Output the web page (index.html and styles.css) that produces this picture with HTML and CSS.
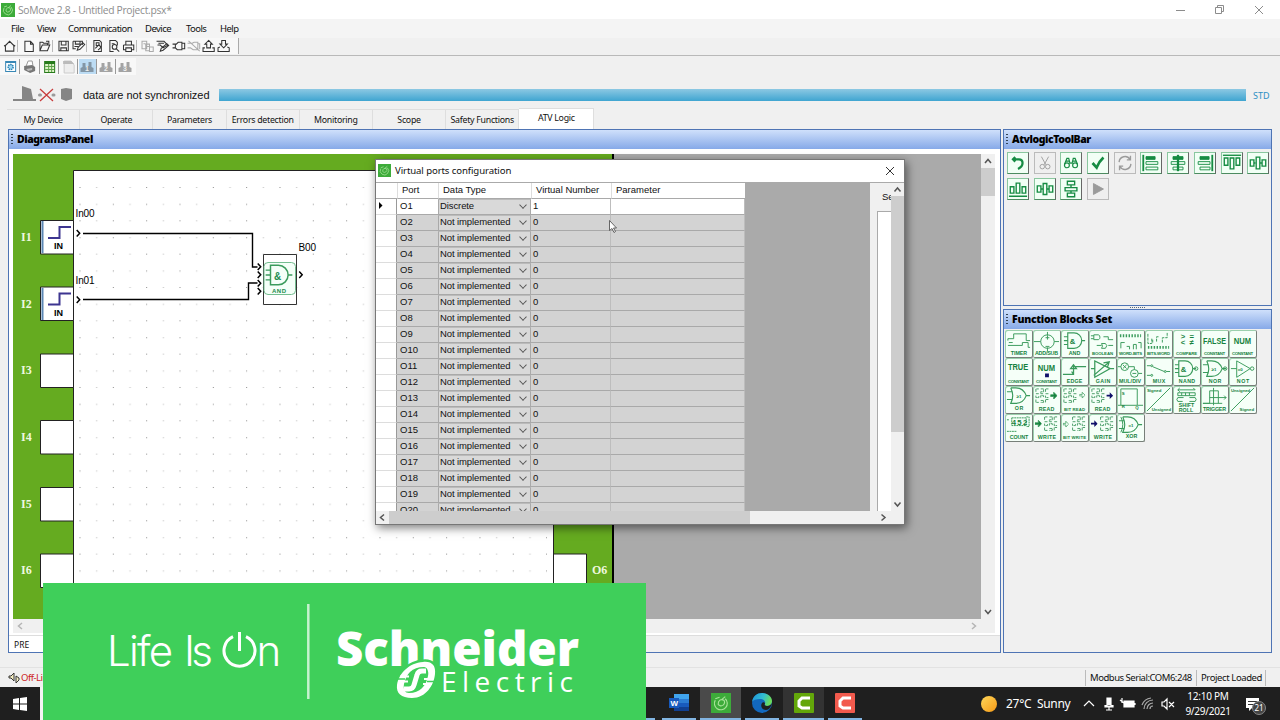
FILE: index.html
```
<!DOCTYPE html>
<html lang="en">
<head>
<meta charset="utf-8">
<title>SoMove 2.8 - Untitled Project.psx*</title>
<link rel="stylesheet" href="styles.css">
</head>
<body>
<svg class="defs" width="0" height="0">
<defs>
<symbol id="leaf" viewBox="0 0 14 14"><rect width="14" height="14" fill="#3dab3a"/><path d="M3 5a4.500 4.500 0 1 0 7-1M5 8a2.500 2.500 0 1 0 4-3c-2-1-4 0-4 3M7 5l3-2.500M3 4l3-1" fill="none" stroke="#a9e39a" stroke-width=".8"/></symbol>
<symbol id="pin" viewBox="0 0 5 9"><path d="M.7 1l3 3.300-3 3.300" fill="none" stroke="#000" stroke-width="1.500"/></symbol>
<symbol id="arrow" viewBox="0 0 8 8"><path d="M0 3h4V0l4 4-4 4V5H0z"/></symbol>
<symbol id="grid" viewBox="0 0 15 17"><path d="M1 4V1h3M1 6h3M6 1h3v3H6v2h3M11 4V1h3M11 6h3M1 8v2h3V8M6 10V8h3v2M11 8v2h3M1 12v3h3M6 13h3v2H6M11 15v-3h3" fill="none" stroke="#4a9d68" stroke-width="1" stroke-dasharray="3 .5"/></symbol>
<symbol id="gate" viewBox="0 0 28 20"><path d="M7 2h6.500a8 8 0 0 1 0 16H7zM3 6h4M3 10h4M3 14h4M21.500 10H25" fill="none" stroke="#3a9b5c" stroke-width="1.200"/></symbol>
<symbol id="orgate" viewBox="0 0 28 20"><path d="M6 2h5q8 0 11 8-3 8-11 8H6q4-8 0-16M2 6h5M2 14h5M22 10h4" fill="none" stroke="#3a9b5c" stroke-width="1.200"/></symbol>
</defs>
</svg>

<div class="app">
<div class="titlebar">
  <svg class="logo"><use href="#leaf"/></svg>
  <span class="title">SoMove 2.8 - Untitled Project.psx*</span>
  <svg class="winbtns" width="96" height="18" fill="none" stroke="#8c8c8c"><path d="M8 9.500h9M87 5l8 8M95 5l-8 8"/><path d="M47.500 6.500h6v6h-6zM49.500 6.500v-2h6v6h-2"/></svg>
</div>
<div class="menubar"><span>File</span><span>View</span><span>Communication</span><span>Device</span><span>Tools</span><span>Help</span></div>
<div class="toolbar">
  <div class="tools">
  <svg viewBox="0 0 15 15"><path d="M3 13V7L7.500 2.500 12 7v6zM1.500 7.500l2-1M13.500 7.500l-2-1"/></svg>
  <i class="sep"></i>
  <svg viewBox="0 0 15 15"><path d="M3.500 2.500h6l3 3v8h-9zM9.500 2.500v3h3"/></svg>
  <svg viewBox="0 0 15 15"><path d="M2.500 12.500v-9h3l1 1h4v2M2.500 12.500l2.500-6h8l-2.500 6zM9 2.500h3v3"/></svg>
  <i class="sep"></i>
  <svg viewBox="0 0 15 15"><path d="M2.500 2.500h10v10h-10zM5 2.500v4h5v-4M4.500 12.500v-3h6v3"/></svg>
  <svg viewBox="0 0 15 15"><path d="M1.500 2.500h10v4M1.500 2.500v8h3M4 2.500v3h5v-3M6 12l1-3 5-5 2 2-5 5zM3 8h4"/></svg>
  <i class="sep"></i>
  <svg viewBox="0 0 15 15"><path d="M3.500 1.500h6l2 2v10h-8zM6 4h3v3H6zM5 10l4-4 2 3-3 3"/></svg>
  <svg viewBox="0 0 15 15"><path d="M11.500 7V3.500l-2-2h-6v12h4"/><circle cx="8.500" cy="8.500" r="2.500"/><path d="M10.500 10.500l3 3M5.500 5h3"/></svg>
  <svg viewBox="0 0 15 15"><path d="M4.500 6V2.500h6V6M2 6.500h11v5h-2M2 6.500v5h2M4.500 9.500h6v4h-6z"/></svg>
  <i class="sep"></i>
  <svg class="off" viewBox="0 0 15 15"><path d="M1.500 2.500h5v8h-5zM5.500 5.500h4v7h-4zM9.500 8.500h4v5h-4zM3 5h2M7 8h2"/></svg>
  <svg viewBox="0 0 15 15"><path d="M1 2.500h8l4 4-5 3-3-3H2M3 4.500h6M5 13l1-3 6-5 2 2-6 5z"/></svg>
  <svg viewBox="0 0 15 15"><path d="M1 5.500h4l2-2h4v8H6l-2-2H1M11 4.500h3v6h-3M4 5v5"/></svg>
  <svg class="off" viewBox="0 0 15 15"><path d="M1 4.500h5l2-1h4v8H7l-3-2H1M2 2l12 11M12 5h2v6"/></svg>
  <svg viewBox="0 0 15 15"><path d="M7.500 1.500l4 4h-2v4h-4v-4h-2zM3.500 9.500h-2v4h12v-4h-2"/></svg>
  <svg viewBox="0 0 15 15"><path d="M7.500 9.500l4-4h-2v-4h-4v4h-2zM3.500 8.500l-2 1v4h12v-4l-2-1"/></svg>
  </div>
</div>
<div class="toolbar2">
  <div class="tools2">
  <svg viewBox="0 0 15 15"><path fill="#3887b5" d="M2 2h11v11H2z"/><path fill="#fff" d="M3 4h9v8H3z"/><circle cx="7.500" cy="8" r="2.500" fill="#9fd6f2" stroke="#267fb0" stroke-width="1.500" stroke-dasharray="1.500 .7"/></svg>
  <svg viewBox="0 0 15 15"><path d="M4 7l2-5h4l1 6" fill="#fff" stroke="#999"/><path fill="#777" d="M2 7l8-1 3 2v4l-5 2-6-3z"/><path fill="#bbb" d="M4 10l6-1v2l-4 1z"/></svg>
  <svg viewBox="0 0 15 15"><path fill="#277a1c" d="M2 2h11v12H2z"/><path fill="#ddf2c8" d="M3 5h9v8H3z"/><path stroke="#5da447" d="M3 7.500h9M3 10.500h9M6.500 5v8M9.500 5v8"/></svg>
  <svg viewBox="0 0 15 15"><path fill="#eee" stroke="#ccc" d="M3 2h7l3 4v8H3z"/><path fill="#bbb" d="M2 2h8l3 3H2z"/></svg>
  <span class="view sel"><svg viewBox="0 0 15 15"><path fill="#8396a5" d="M1 13V9l2-1V4h3v3h3V3h3v5l2 1v4z"/><text x="5.500" y="12">1</text></svg></span>
  <span class="view"><svg viewBox="0 0 15 15"><path fill="#a3a3a3" d="M1 13V9l2-1V4h3v3h3V3h3v5l2 1v4z"/><text x="5.500" y="12">2</text></svg></span>
  <span class="view"><svg viewBox="0 0 15 15"><path fill="#a3a3a3" d="M1 13V9l2-1V4h3v3h3V3h3v5l2 1v4z"/><text x="5.500" y="12">3</text></svg></span>
  </div>
</div>
<div class="sync">
  <svg width="64" height="20"><path fill="#858585" d="M9 1l9 3 2 10h3v2H0v-2h9z"/><path stroke="#9b9b9b" stroke-width="3" stroke-linecap="round" d="M26.500 10h1M40 10h1"/><path stroke="#c83c3c" stroke-width="1.300" d="M27 4l13 12M40 4L27 16"/><path fill="#858585" d="M48 4l5-1 6 1v10l-6 2-5-2z"/></svg>
  <span class="sync-text">data are not synchronized</span>
  <div class="bar"></div>
  <span class="std">STD</span>
</div>
<div class="tabs"><span>My Device</span><span>Operate</span><span>Parameters</span><span>Errors detection</span><span>Monitoring</span><span>Scope</span><span>Safety Functions</span><span class="active">ATV Logic</span></div>

<div class="work">
  <section class="panel diagrams">
    <h2><b>DiagramsPanel</b></h2>
    <div class="scroller">
      <div class="canvas">
      <svg width="601" height="465" viewBox="13 154 601 465">
        <defs><pattern id="dots" x="79.500" y="187" width="33.330" height="33.330" patternUnits="userSpaceOnUse"><path fill="#8a8a8a" d="M0 0h1v1H0zM0 17h1v1H0z"/><path fill="#cacaca" d="M16.500 0h1.400v1h-1.400zM16.500 17h1.400v1h-1.400z"/></pattern></defs>
        <path fill="#65ab20" d="M13 154h600v465H13z"/>
        <path fill="#fff" stroke="#222" d="M73.500 170.500h480v460h-480z"/>
        <path fill="url(#dots)" d="M79 186h468v400H79z"/>
        <path d="M613 154v465" stroke="#000" stroke-width="2"/>
        <g fill="#fff" stroke="#222"><path d="M40.500 220.500h33v33.500h-33zM40.500 287h33v33.500h-33zM40.500 354h33v33.500h-33zM40.500 420.500h33V454h-33zM40.500 487.500h33V521h-33zM40.500 554h33v33.500h-33zM553.500 554h33v33.500h-33z"/></g>
        <path stroke="#5b86b4" stroke-width="2" d="M42.500 221v32M42.500 288v32"/>
        <path stroke="#3d3590" stroke-width="2" fill="none" d="M48 238h11.500v-11H71M48 304.500h11.500v-11H71"/>
        <g class="in"><text x="54" y="249">IN</text><text x="54" y="316">IN</text></g>
        <g class="port"><text x="21" y="241">I1</text><text x="21" y="307.500">I2</text><text x="21" y="374">I3</text><text x="21" y="441">I4</text><text x="21" y="507.500">I5</text><text x="21" y="574">I6</text><text x="592" y="574">O6</text></g>
        <g class="name"><text x="75.500" y="217" textLength="19">In00</text><text x="75.500" y="284" textLength="19">In01</text><text x="298.500" y="251" textLength="17.500">B00</text></g>
        <path fill="none" stroke="#000" stroke-width="1.400" d="M83 233.500h169.500v33.500h5M83 299.500h165.500V283h9"/>
        <use href="#pin" x="76" y="229" width="5" height="9"/><use href="#pin" x="76" y="295.500" width="5" height="9"/>
        <use href="#pin" x="257" y="262.500" width="5" height="9"/><use href="#pin" x="257" y="270.500" width="5" height="9"/><use href="#pin" x="257" y="279" width="5" height="9"/><use href="#pin" x="257" y="287" width="5" height="9"/><use href="#pin" x="298.500" y="270.500" width="5" height="9"/>
        <path fill="#fff" stroke="#333" d="M263.500 254.500h33v50h-33z"/>
        <rect x="264" y="262.500" width="31.500" height="32" rx="4" fill="#f4fff8" stroke="#74bd90"/>
        <use href="#gate" x="262" y="262.500" width="34" height="25"/>
        <text class="and" x="274" y="279.500">&amp;</text><text class="and small" x="272" y="293" textLength="14">AND</text>
      </svg>
      </div>
      <div class="vscroll"><svg width="14" height="14"><path d="M4 9l3-3.500L10 9"/></svg><div class="thumb"></div><svg width="14" height="14"><path d="M4 5l3 3.500L10 5"/></svg></div>
      <div class="hscroll"><svg width="14" height="14"><path d="M9 4L5.500 7 9 10"/></svg><svg width="14" height="14"><path d="M5 4l3.500 3L5 10"/></svg></div>
    </div>
    <div class="pages"><span>PRE</span></div>
  </section>

  <div class="side">
  <section class="panel toolbox">
    <h2><b>AtvlogicToolBar</b></h2>
    <div class="btns">
    <svg viewBox="0 0 22 22"><path stroke-width="2.500" d="M8 4.500L5.500 7 8 9.500M6 7h6q4 0 4 4t-5 6.500"/></svg>
    <svg class="off" viewBox="0 0 22 22"><path d="M7 4l5 9M15 4l-5 9"/><circle cx="8" cy="15" r="2.500"/><circle cx="14" cy="15" r="2.500"/></svg>
    <svg viewBox="0 0 22 22"><path stroke-width="1.300" d="M4 12l2.500-6h2l1.500 6M12 12l1.500-6h2l2.500 6M9 11h4M5.500 9h4M12.500 9h4"/><circle stroke-width="1.300" cx="6.500" cy="13.500" r="2.700"/><circle stroke-width="1.300" cx="15.500" cy="13.500" r="2.700"/></svg>
    <svg viewBox="0 0 22 22"><path stroke-width="3" d="M5 11l4.500 5q3-7 7.500-11"/></svg>
    <svg class="off" viewBox="0 0 22 22"><path stroke-width="1.500" d="M4.500 10a6.500 6.500 0 0 1 12-3M17.500 12a6.500 6.500 0 0 1-12 3M17 3v4.500h-4M5 19v-4.500h4"/></svg>
    <svg viewBox="0 0 22 22"><path stroke-width="2" d="M2.500 2v18"/><path fill="#168c43" d="M5.500 4h10v3h-10z"/><path d="M5.500 9.500h13v3h-13zM5.500 15.500h13v3h-13z"/></svg>
    <svg viewBox="0 0 22 22"><path stroke-width="2.500" d="M11 2v18"/><path fill="#168c43" d="M5.500 4h11v3h-11z"/><path d="M3.500 9.500h15v3h-15zM5.500 15.500h11v3h-11z"/></svg>
    <svg viewBox="0 0 22 22"><path stroke-width="2" d="M19 2v18"/><path fill="#168c43" d="M5.500 4h10v3h-10z"/><path d="M3.500 9.500h13v3h-13zM5.500 15.500h11v3h-11z"/></svg>
    <svg viewBox="0 0 22 22"><path stroke-width="1.500" d="M1 2.500h20"/><path stroke-width="1.500" d="M2.500 5.500h4v8h-4zM9 5.500h4v12H9zM15.500 5.500h4v8h-4z"/></svg>
    <svg viewBox="0 0 22 22"><path stroke-width="1.500" d="M2.500 7.500h4v7h-4zM9 4.500h4v13H9zM15.500 7.500h4v7h-4zM6 11h2M13 11h2"/></svg>
    <svg viewBox="0 0 22 22"><path stroke-width="1.500" d="M1 19h20M2.500 8.500h4v7h-4zM9 4.500h4v11H9zM15.500 8.500h4v7h-4z"/></svg>
    <svg viewBox="0 0 22 22"><path stroke-width="1.500" d="M2.500 7.500h4v7h-4zM9 5h4v12H9zM15.500 7.500h4v7h-4zM6 11h3M13 11h3"/></svg>
    <svg viewBox="0 0 22 22"><path stroke-width="1.500" d="M7 2.500h8v4H7zM4.500 9.500h13v3.500h-13zM7 15.500h8v4H7zM11 6v3M11 13v3"/></svg>
    <svg class="off" viewBox="0 0 22 22"><path fill="#9b9b9b" d="M6 5l11 6-11 6z"/></svg>
    </div>
  </section>
  <div class="grip"></div>
  <section class="panel blocks">
    <h2><b>Function Blocks Set</b></h2>
    <div class="fbs">
    <svg viewBox="0 0 28 28"><path d="M3 11V9h6V4h13v7h4M3 16h15v-3h6v5h2M4 13h4"/><text x="6" y="26" textLength="17">TIMER</text></svg>
    <svg viewBox="0 0 28 28"><circle cx="15" cy="12" r="7"/><path d="M1 12h7M22 12h5M15 2v4M15 18v4M13 8h4M15 6v4M13 17h4"/><text x="2" y="26" textLength="24">ADD/SUB</text></svg>
    <svg viewBox="0 0 28 28"><use href="#gate" y="1" width="28" height="20"/><text class="mid" x="9" y="14">&amp;</text><text x="8" y="26" textLength="12">AND</text></svg>
    <svg viewBox="0 0 28 28"><path d="M5 5h5a3 3 0 0 1 0 5H5zM13 14h4q3 2 0 5h-4q2-2 0-5M15 7h5v3h5M2 6h3M2 9h3M8 16h5M20 16h5"/><text class="thin" x="3" y="26" textLength="22">BOOLEAN</text></svg>
    <svg viewBox="0 0 28 28"><path stroke-dasharray="1.500 1.500" stroke-width="3" d="M3 6h22"/><path d="M4 19v-6h4M10 17h3v3M17 20v-5h3v5M22 13h3v6"/><text class="thin" x="2" y="26" textLength="24">WORD-BITS</text></svg>
    <svg viewBox="0 0 28 28"><path d="M3 4v10h4V8M8 13v-3M12 12V7h3M18 13V8h5V3" stroke-dasharray="3 1"/><path stroke-dasharray="1.500 1.500" stroke-width="3" d="M3 18h22"/><text class="thin" x="2" y="26" textLength="24">BITS-WORD</text></svg>
    <svg viewBox="0 0 28 28"><text class="cmp" x="8" y="9">&gt;</text><text class="cmp" x="17" y="9">=</text><text class="cmp" x="8" y="16">&lt;</text><text class="cmp" x="17" y="16">≠</text><text class="thin" x="3" y="26" textLength="22">COMPARE</text></svg>
    <svg viewBox="0 0 28 28"><text class="big" x="2" y="15" textLength="24" lengthAdjust="spacingAndGlyphs">FALSE</text><text class="thin" x="3" y="26" textLength="22">CONSTANT</text></svg>
    <svg viewBox="0 0 28 28"><text class="big" x="5" y="14" textLength="18" lengthAdjust="spacingAndGlyphs">NUM</text><text class="thin" x="3" y="26" textLength="22">CONSTANT</text></svg>
    <svg viewBox="0 0 28 28"><text class="big" x="3" y="12" textLength="21" lengthAdjust="spacingAndGlyphs">TRUE</text><text class="thin" x="3" y="26" textLength="22">CONSTANT</text></svg>
    <svg viewBox="0 0 28 28"><text class="big" x="5" y="13" textLength="18" lengthAdjust="spacingAndGlyphs">NUM</text><path class="navy" d="M12.500 16h4v4h-4z"/><text class="thin" x="3" y="26" textLength="22">CONSTANT</text></svg>
    <svg viewBox="0 0 28 28"><path d="M2 17h11V9h13M13 17l-2-3M13 7l-3 4h6z" stroke-width="1.300"/><text x="6" y="26" textLength="16">EDGE</text></svg>
    <svg viewBox="0 0 28 28"><path d="M6 3v17l16-9zM5 18L20 5M15 5l6-1-2 6M2 11h4M22 11h4" stroke-width="1.300"/><text x="7" y="26" textLength="15">GAIN</text></svg>
    <svg viewBox="0 0 28 28"><circle cx="8" cy="9" r="4"/><circle cx="18" cy="16" r="4"/><path d="M6 7l4 4M10 7l-4 4M1 9h3M12 9h6v3M16 16h4M22 16h4"/><text x="2" y="26" textLength="23">MUL/DIV</text></svg>
    <svg viewBox="0 0 28 28"><path d="M2 8h4M8 9l12 5M22 14h4M2 18h4"/><circle cx="7" cy="8" r="1"/><circle cx="21" cy="14" r="1"/><circle cx="7" cy="18" r="1"/><text x="8" y="26" textLength="13">MUX</text></svg>
    <svg viewBox="0 0 28 28"><use href="#gate" x="-1" y="1" width="28" height="20"/><circle cx="24" cy="11" r="1.800"/><text class="mid" x="8" y="14">&amp;</text><text x="6" y="26" textLength="17">NAND</text></svg>
    <svg viewBox="0 0 28 28"><use href="#orgate" y="1" width="28" height="20"/><circle cx="25" cy="11" r="1.800"/><text class="thin" x="11" y="13">≥1</text><text x="8" y="26" textLength="13">NOR</text></svg>
    <svg viewBox="0 0 28 28"><path d="M8 3v17l14-9zM2 11h6"/><circle cx="24" cy="11" r="1.800"/><text class="thin" x="9" y="13">=0</text><text x="8" y="26" textLength="13">NOT</text></svg>
    <svg viewBox="0 0 28 28"><use href="#orgate" y="0" width="28" height="20"/><text class="thin" x="12" y="12">≥1</text><text x="10" y="25" textLength="9">OR</text></svg>
    <svg viewBox="0 0 28 28"><use href="#grid" x="2" y="2" width="15" height="17"/><use class="solid" href="#arrow" x="18" y="6" width="7" height="8"/><text x="6" y="26" textLength="16">READ</text></svg>
    <svg viewBox="0 0 28 28"><use href="#grid" x="2" y="2" width="15" height="17"/><use href="#arrow" x="19" y="6" width="6" height="7"/><text class="thin" x="3" y="26" textLength="22">BIT READ</text></svg>
    <svg viewBox="0 0 28 28"><use href="#grid" x="2" y="2" width="15" height="17"/><use class="navy" href="#arrow" x="18" y="6" width="7" height="8"/><text x="6" y="26" textLength="16">READ</text></svg>
    <svg viewBox="0 0 28 28"><path d="M4 3h17v17H4zM1 20h3M21 20h6"/><text class="thin" x="5" y="9">S</text><text class="thin" x="5" y="23">R</text><text class="thin" x="19" y="24">Q</text></svg>
    <svg viewBox="0 0 28 28"><path d="M2 26L26 2"/><text class="thin" x="2" y="6" textLength="15">Signed</text><text class="thin" x="7" y="26" textLength="20">Unsigned</text></svg>
    <svg viewBox="0 0 28 28"><path d="M5 4h18M5 4l2-2M5 4l2 2M23 4l-2-2M5 7h18v3H5zM9 7v3M13 7v3M17 7v3M10 16H5q-2-2 0-4h6M17 16h6q2-2 0-4h-6"/><text x="6" y="21.500" textLength="16">SHIFT</text><text x="6" y="26.500" textLength="15">ROLL</text></svg>
    <svg viewBox="0 0 28 28"><path d="M2 18h7V5h9v13M9 12h17M13 2v18M2 18h20M24 10l2 2-2 2"/><text x="2" y="26" textLength="24">TRIGGER</text></svg>
    <svg viewBox="0 0 28 28"><path d="M2 26L26 2"/><text class="thin" x="2" y="6" textLength="20">Unsigned</text><text class="thin" x="11" y="26" textLength="15">Signed</text></svg>
    <svg viewBox="0 0 28 28"><path d="M7 4h15v8H7zM2 6h2M2 18h10M22 3h3v10h-3" stroke-dasharray="2 .6"/><text class="mid" x="7" y="11" textLength="16">452</text><text x="5" y="26" textLength="19">COUNT</text></svg>
    <svg viewBox="0 0 28 28"><use href="#grid" x="11" y="2" width="15" height="17"/><use class="solid" href="#arrow" x="2" y="6" width="7" height="8"/><text x="5" y="26" textLength="19">WRITE</text></svg>
    <svg viewBox="0 0 28 28"><use href="#grid" x="11" y="2" width="15" height="17"/><use href="#arrow" x="2" y="7" width="6" height="7"/><text class="thin" x="2" y="26" textLength="24">BIT WRITE</text></svg>
    <svg viewBox="0 0 28 28"><use href="#grid" x="11" y="2" width="15" height="17"/><use class="navy" href="#arrow" x="2" y="6" width="7" height="8"/><text x="5" y="26" textLength="19">WRITE</text></svg>
    <svg viewBox="0 0 28 28"><use href="#orgate" y="1" width="28" height="20"/><path d="M4 3q4 8 0 16"/><text class="thin" x="12" y="13">=1</text><text x="9" y="25" textLength="12">XOR</text></svg>
    </div>
  </section>
  </div>
</div>

<div class="statusbar">
  <svg width="13" height="14" viewBox="0 0 13 14"><path d="M1 5h2l3-3v8L3 7H1zM8 5v7l3-3V7z" fill="#f3ecc0" stroke="#333"/></svg><span class="offline">Off-Line</span>
  <span class="cell com">Modbus Serial:COM6:248</span><span class="cell loaded">Project Loaded</span>
</div>

<div class="taskbar">
  <div class="start"><svg width="14" height="14"><path fill="#fff" d="M0 2l6-1v5.500H0zM7 1l7-1v6.500H7zM0 7.500h6V13l-6-1zM7 7.500h7V14l-7-1z"/></svg></div>
  <div class="apps">
    <div class="appbtn first"></div>
    <div class="appbtn"><svg width="20" height="20" viewBox="0 0 20 20"><path fill="#41a5ee" d="M5 1h15v5H5z"/><path fill="#2b7cd3" d="M5 6h15v5H5z"/><path fill="#185abd" d="M5 10h15v4H5z"/><path fill="#103f91" d="M5 14h15v4H5z"/><path fill="#185abd" d="M0 5h10v10H0z"/><text x="1.500" y="13" class="word">W</text></svg></div>
    <div class="appbtn wide on"><svg width="20" height="20"><use href="#leaf"/></svg></div>
    <div class="appbtn"><svg width="22" height="22" viewBox="0 0 22 22"><defs><linearGradient id="eg" x2="1" y2=".3"><stop stop-color="#1c8fdc"/><stop offset=".6" stop-color="#33bfd0"/><stop offset="1" stop-color="#6bdc5e"/></linearGradient></defs><circle cx="11" cy="11" r="10" fill="#1268be"/><path fill="url(#eg)" d="M1 10C2 4 6 1 11 1c6 0 10 4 10 8 0 3-2 5-5 5-2 0-3-1-2-2 1-3-2-5-5-5-4 0-7 1-8 3"/><path fill="#1f1f1f" d="M14 12c-1 1 0 2 2 2 2 0 4-1 5-3-1 4-3 7-6 7-4 0-6-4-4-7 1-1 3-1 3 1"/></svg></div>
    <div class="appbtn wide dim"><svg width="20" height="20"><rect width="20" height="20" rx="1" fill="#63a70a"/><path d="M16 5H8L5 8v5l3 2h8" fill="none" stroke="#fff" stroke-width="3"/></svg></div>
    <div class="appbtn"><svg width="20" height="20"><rect width="20" height="20" rx="1" fill="#f25a4d"/><path d="M16 5H8L5 8v5l3 2h8" fill="none" stroke="#fff" stroke-width="3"/></svg></div>
  </div>
  <div class="sun"></div>
  <span class="weather">27°C&nbsp; Sunny</span>
  <svg class="tray" width="94" height="18" fill="none" stroke="#fff" stroke-width="1.200"><path d="M2 11l5-5 5 5"/><path fill="#fff" d="M25 3h4v8h-4zM23 10v2h8v-2M27 12v3M24 15h6"/><path fill="#fff" d="M42 6h10v6H42zM53 8v2"/><path d="M38 5l4 3M40 3v5"/><path stroke="#aaa" d="M62 14a9 9 0 0 1 9-9M65 14a6 6 0 0 1 6-6M68 14a3 3 0 0 1 3-3M60 10a11 11 0 0 1 9-7"/><path d="M80 7h2l3-3v10l-3-3h-2zM87 7l5 5M92 7l-5 5"/></svg>
  <div class="clock"><span>12:10 PM</span><span>9/29/2021</span></div>
  <div class="notes"><svg width="14" height="14"><path fill="#fff" d="M0 1h13v10H6l-3 3v-3H0z"/><path stroke="#333" d="M2 4.500h9M2 7.500h7"/></svg><span class="badge">21</span></div>
</div>
</div>

<div class="dialog">
  <div class="dlg-title"><svg width="13" height="13"><use href="#leaf"/></svg><span>Virtual ports configuration</span><svg class="close" width="10" height="10"><path d="M1 1l8 8M9 1L1 9" stroke="#333"/></svg></div>
  <div class="dlg-body">
    <div class="gridbox">
    <table>
    <tr><th></th><th>Port</th><th>Data Type</th><th>Virtual Number</th><th>Parameter</th></tr>
    <tr class="cur"><td><svg width="5" height="7"><path d="M1 0l3.500 3.500L1 7z"/></svg></td><td>O1</td><td class="combo"><span>Discrete</span></td><td>1</td><td></td></tr>
    <tr><td></td><td>O2</td><td class="combo"><span>Not implemented</span></td><td>0</td><td></td></tr>
    <tr><td></td><td>O3</td><td class="combo"><span>Not implemented</span></td><td>0</td><td></td></tr>
    <tr><td></td><td>O4</td><td class="combo"><span>Not implemented</span></td><td>0</td><td></td></tr>
    <tr><td></td><td>O5</td><td class="combo"><span>Not implemented</span></td><td>0</td><td></td></tr>
    <tr><td></td><td>O6</td><td class="combo"><span>Not implemented</span></td><td>0</td><td></td></tr>
    <tr><td></td><td>O7</td><td class="combo"><span>Not implemented</span></td><td>0</td><td></td></tr>
    <tr><td></td><td>O8</td><td class="combo"><span>Not implemented</span></td><td>0</td><td></td></tr>
    <tr><td></td><td>O9</td><td class="combo"><span>Not implemented</span></td><td>0</td><td></td></tr>
    <tr><td></td><td>O10</td><td class="combo"><span>Not implemented</span></td><td>0</td><td></td></tr>
    <tr><td></td><td>O11</td><td class="combo"><span>Not implemented</span></td><td>0</td><td></td></tr>
    <tr><td></td><td>O12</td><td class="combo"><span>Not implemented</span></td><td>0</td><td></td></tr>
    <tr><td></td><td>O13</td><td class="combo"><span>Not implemented</span></td><td>0</td><td></td></tr>
    <tr><td></td><td>O14</td><td class="combo"><span>Not implemented</span></td><td>0</td><td></td></tr>
    <tr><td></td><td>O15</td><td class="combo"><span>Not implemented</span></td><td>0</td><td></td></tr>
    <tr><td></td><td>O16</td><td class="combo"><span>Not implemented</span></td><td>0</td><td></td></tr>
    <tr><td></td><td>O17</td><td class="combo"><span>Not implemented</span></td><td>0</td><td></td></tr>
    <tr><td></td><td>O18</td><td class="combo"><span>Not implemented</span></td><td>0</td><td></td></tr>
    <tr><td></td><td>O19</td><td class="combo"><span>Not implemented</span></td><td>0</td><td></td></tr>
    <tr><td></td><td>O20</td><td class="combo"><span>Not implemented</span></td><td>0</td><td></td></tr>
    </table>
    </div>
    <div class="settings"><span>Se</span><div></div></div>
    <div class="dlg-v"><svg width="13" height="13"><path d="M3.500 8.500l3-3.500 3 3.500"/></svg><div></div><svg width="13" height="13"><path d="M3.500 4.500l3 3.500 3-3.500"/></svg></div>
  </div>
  <div class="dlg-h"><svg width="13" height="13"><path d="M8 3.500L4.500 6.500 8 9.500"/></svg><div></div><svg width="13" height="13"><path d="M4.500 3.500L8 6.500 4.500 9.500"/></svg></div>
</div>
<svg class="cursor" width="9" height="14"><path d="M.5.500v10l2.500-2 2 4 1.500-1-2-3.500h3z" fill="#fff" stroke="#444" stroke-width=".8"/></svg>

<div class="banner">
<svg width="603" height="137" viewBox="43 583 603 137">
  <g class="life"><text x="107" y="666" textLength="66">Life</text><text x="184" y="666" textLength="29">Is</text><text x="256.500" y="666">n</text></g>
  <path d="M246 636.600A15.500 15.500 0 1 1 233 636.600M239.500 632v19" fill="none" stroke="#fff" stroke-width="3"/>
  <path d="M308.300 604v95" stroke="#c7f2cf" stroke-width="2.500"/>
  <text class="sch" x="336" y="665.500" textLength="243" lengthAdjust="spacingAndGlyphs">Schneider</text>
  <text class="ele" x="441" y="692" textLength="132">Electric</text>
  <g fill="none">
    <path d="M423 662c9-1 13 4 12 12-1 11-9 24-23 24-11 0-16-5-15-13 2-12 12-22 26-23z" fill="#fff" stroke="#3fcf5a" stroke-width="5" paint-order="stroke"/>
    <path d="M424 667c-12 0-18 7-20 17-1 6 1 9 5 9 11 0 17-7 19-17 1-5-1-9-4-9z" fill="#3fcf5a"/>
    <path d="M426 671h-4q-4 0-5 4l-3 10q-1 4-5 4h-5" stroke="#fff" stroke-width="5"/>
    <path d="M400 676.500h9M399 681.500h9M424 679h9M423 684h9" stroke="#fff" stroke-width="2.200"/>
    <path d="M396 679h9M427 681.500h10" stroke="#3fcf5a" stroke-width="1.500"/>
  </g>
</svg>
</div>
</body>
</html>
```
FILE: styles.css
```
* {box-sizing: border-box;}
body {margin: 0;width: 1280px;height: 720px;overflow: hidden;background: #f0f0f0;color: #111;font-family: "Noto Sans", "Open Sans", sans-serif;font-size: 9px;}
svg {display: block;flex: none;}
.defs {position: absolute;}
.app {display: flex;flex-direction: column;height: 720px;}

.titlebar {display: flex;align-items: center;height: 19px;background: #fff;padding: 0 16px 0 1px;color: #8d8d8d;}
.logo {width: 14px;height: 14px;}
.title {font-family: "Open Sans", sans-serif;font-size: 10.300px;margin-left: 3px;letter-spacing: -.3px;}
.winbtns {margin-left: auto;}
.menubar {display: grid;grid-template-columns: 26px 31px 77px 41px 34px 30px;height: 19px;line-height: 19px;padding-left: 11px;font-size: 9.500px;letter-spacing: -.55px;background: #f4f4f4;}
.toolbar {height: 18px;border-bottom: 1px solid #b9b9b9;background: #f0f0f0;}
.tools {display: flex;align-items: center;width: 239px;height: 16px;padding-left: 2px;background: #f8f8f8;border-right: 1px solid #aaa;}
.tools svg {width: 15.250px;height: 14px;fill: none;stroke: #333;stroke-width: 1.100;}
.tools .off {stroke: #aaa;}
.sep {width: 4px;height: 12px;border-left: 1px solid #bbb;}
.toolbar2 {height: 20px;padding-top: 2px;}
.tools2 {display: flex;align-items: center;width: 136px;height: 17px;padding-left: 2px;background: #f8f8f8;}
.tools2 > * {width: 18.300px;height: 15px;border-right: 1px solid #999;margin-right: 1px;}
.tools2 > :last-child {border: 0;}
.view svg {width: 16px;height: 15px;}
.view text {font: bold 7px "Liberation Sans", sans-serif;fill: #eee;}
.sel {background: #bcdcf4;}
.sync {display: flex;align-items: center;height: 36px;padding: 2px 0 0 13px;}
.sync-text {font: 11px "Liberation Sans", Arial, sans-serif;width: 136px;margin: -1px 0 0 6px;white-space: nowrap;}
.bar {width: 1027px;height: 12px;background: linear-gradient(#8cc8e3, #3fa5d1);}
.std {margin-left: 7px;font-size: 9px;color: #2a8fc4;}
.tabs {display: flex;align-items: flex-end;height: 17px;padding-left: 7px;font-size: 8.800px;}
.tabs span {width: 73.200px;height: 20px;line-height: 20px;text-align: center;border: 1px solid #dedede;border-width: 1px 1px 0 0;white-space: nowrap;letter-spacing: -.28px;}
.tabs .active {width: 75px;height: 21px;line-height: 19px;background: #fff;}

.work {display: flex;gap: 2px;height: 524px;margin-left: 8px;}
.panel {border: 1px solid #4e74b4;display: flex;flex-direction: column;}
.panel h2 {display: flex;flex: none;margin: 0;height: 19px;line-height: 18px;padding-left: 2px;background: linear-gradient(#cfe0fb, #86a9e8);font-size: 10.500px;color: #000;letter-spacing: -.45px;}
.panel h2::before {content: "";width: 2px;height: 11px;margin: 4px 4px 0 0;background: repeating-linear-gradient(#345 0 1px, transparent 1px 3px);}
.diagrams {width: 993px;background: #fff;}
.scroller {display: grid;flex: none;grid-template-columns: 968px 14px;grid-template-rows: 465px 14px;padding: 5px 0 2px 4px;}
.canvas {background: #aaa;}
.in {font: bold 9px "Liberation Sans", sans-serif;}
.port {font: bold 12px "Liberation Serif", serif;fill: #eef8df;}
.name {font: 10px "Liberation Sans", sans-serif;}
.and {font: bold 10px "Liberation Sans", sans-serif;fill: #218c4d;}
.small {font-size: 6px;}
.vscroll {display: flex;flex-direction: column;background: #f0f0f0;}
.vscroll svg, .hscroll svg, .dlg-v svg, .dlg-h svg {fill: none;stroke: #555;stroke-width: 1.500;}
.vscroll .thumb {height: 28px;background: #cdcdcd;margin-bottom: auto;}
.hscroll {display: flex;grid-column: 1 / 3;justify-content: space-between;padding-right: 14px;background: #f0f0f0;}
.hscroll svg {stroke: #b5b5b5;}
.pages {flex: 1;border-top: 1px solid #ddd;background: #f0f0f0;}
.pages span {display: block;width: 70px;height: 16px;line-height: 17px;padding-left: 5px;background: #fff;font-size: 8.500px;}
.side {width: 269px;display: flex;flex-direction: column;}
.toolbox {height: 177px;}
.btns {display: grid;grid-template-columns: repeat(10, 22px);column-gap: 4.700px;row-gap: 4px;padding: 3px 3px;}
.btns svg {width: 22px;height: 22px;background: #f1fff5;border: 1px solid #8ac79f;border-right-color: #666;border-bottom-color: #4c8b60;fill: none;stroke: #168c43;}
.btns .off {background: #efefef;border-color: #bbb;stroke: #9b9b9b;}
.grip {height: 3px;width: 16px;margin-left: 127px;background: repeating-linear-gradient(90deg, #567 0 1px, transparent 1px 2px) 0 1px / 16px 1px no-repeat;}
.blocks {flex: 1;}
.blocks h2 {letter-spacing: -.28px;}
.fbs {display: grid;grid-template-columns: repeat(9, 28px);padding: 1px 1px;}
.fbs svg {width: 28px;height: 28px;background: #f5fff8;border: 1px solid #777f79;border-width: 0 1px 1px 0;box-shadow: inset 1px 1px #9bd0ad;border-radius: 2px;fill: none;stroke: #3a9b5c;}
.fbs text {font: bold 5.500px "Liberation Sans", sans-serif;fill: #16823e;stroke: none;}
.fbs .thin {font-size: 4.500px;}
.fbs .mid {font-size: 8px;}
.fbs .cmp {font-size: 8px;}
.fbs .big {font-size: 9.500px;}
.fbs .solid {fill: #16823e;}
.fbs .navy {fill: #10106a;stroke: none;}

.statusbar {display: flex;align-items: center;margin-top: 14px;height: 20px;border-top: 1px solid #e2e2e2;padding-left: 8px;font-size: 9.500px;letter-spacing: -.48px;}
.offline {color: #c22;}
.cell {height: 16px;line-height: 15px;border-left: 1px solid #bbb;padding-left: 4px;white-space: nowrap;}
.com {margin-left: auto;width: 111px;}
.loaded {width: 70px;border-right: 1px solid #bbb;margin-right: 14px;letter-spacing: -.4px;}
.taskbar {display: flex;align-items: center;height: 33px;background: #1f1f1f;color: #fff;}
.start {display: flex;align-items: center;width: 43px;height: 33px;padding-left: 13px;border-right: 3px solid #f4f4f4;}
.apps {display: flex;gap: 4px;height: 33px;margin-left: 578px;}
.appbtn {width: 34px;height: 33px;display: flex;align-items: center;justify-content: center;border-bottom: 2px solid #82b5e2;}
.first {margin-right: 3px;}
.wide {width: 41px;}
.on {background: #4a4a4a;}
.dim {background: #333;}
.word {font: bold 8px "Liberation Sans", sans-serif;fill: #fff;}
.sun {width: 16px;height: 16px;margin-left: 119px;border-radius: 50%;background: linear-gradient(135deg, #ffd75a, #f69a16);}
.weather {width: 76px;margin-left: 9px;font-size: 12px;letter-spacing: -.3px;white-space: nowrap;}
.clock {display: flex;flex-direction: column;width: 60px;margin-left: 2px;text-align: center;font-size: 10px;line-height: 15px;letter-spacing: -.25px;}
.notes {position: relative;margin-left: 8px;}
.badge {position: absolute;left: 6px;top: 4px;width: 14px;height: 14px;border-radius: 50%;background: #444;border: 1px solid #888;font-size: 8px;line-height: 12px;text-align: center;}

.dialog {position: absolute;left: 375px;top: 159px;width: 530px;height: 366px;border: 1px solid #777;background: #fff;box-shadow: 2px 3px 9px rgba(0,0,0,.5);display: flex;flex-direction: column;}
.dlg-title {display: flex;align-items: center;height: 22px;padding: 0 9px 1px 2px;font-size: 9.600px;}
.dlg-title span {margin-left: 4px;letter-spacing: -.1px;}
.close {margin-left: auto;}
.dlg-body {display: flex;height: 329px;overflow: hidden;border-top: 1px solid #aaa;}
.gridbox {width: 494px;background: #aaa;}
table {table-layout: fixed;width: 369px;border-collapse: separate;border-spacing: 0;font: 9.500px "Liberation Sans", Arial, sans-serif;}
th, td {height: 16px;padding: 0 0 2px 2px;text-align: left;font-weight: normal;line-height: 12px;background: #d3d3d3;border: solid #a9a9a9;border-width: 0 0 1px;white-space: nowrap;}
th {background: #fff;padding: 0 0 1px 4px;}
th:nth-child(2), th:nth-child(3) {padding-left: 4px;}
th + th {border-left: 1px solid #ddd;}
td:nth-child(2) {padding-left: 3px;}
td:nth-child(n+4) {border-right: 1px solid #bdbdbd;}
th:nth-child(1) {width: 21px;}
th:nth-child(2) {width: 41px;}
th:nth-child(3) {width: 93px;}
th:nth-child(4) {width: 80px;}
td:first-child {background: #fff;border-right: 1px solid #999;border-bottom-color: #ddd;}
.cur td {background: #fff;}
td.combo {background: #d9d9d9;border: 1px solid #a9a9a9;border-top-color: #bbb;padding-left: 1px;letter-spacing: -.1px;}
.combo span {display: flex;justify-content: space-between;}
.combo span::after {content: "";width: 5px;height: 5px;margin: 2px 4px 0 0;border: solid #555;border-width: 0 1px 1px 0;transform: rotate(45deg) scale(.9);}
.settings {width: 21px;background: #f0f0f0;font: 9.500px "Liberation Sans", Arial, sans-serif;padding: 8px 0 0 7px;overflow: hidden;}
.settings span {display: block;height: 20px;padding-left: 5px;}
.settings div {height: 310px;background: #fff;border: 2px solid #aaa;border-right: 0;border-width: 1px 0 0 1px;}
.dlg-v {display: flex;flex-direction: column;width: 13px;background: #f0f0f0;}
.dlg-v div {height: 236px;background: #cdcdcd;margin-bottom: auto;}
.dlg-h {display: flex;height: 13px;padding-right: 14px;background: #f0f0f0;}
.dlg-h div {width: 361px;background: #cdcdcd;margin-right: auto;}
.cursor {position: absolute;left: 609px;top: 220px;}
.banner {position: absolute;left: 43px;top: 583px;width: 603px;height: 137px;background: #3fcf5a;}
.life {font: 300 42px Inter, Lato, sans-serif;fill: #fff;}
.sch {font: 900 48px "Open Sans", Lato, sans-serif;fill: #fff;}
.ele {font: 500 28px "Open Sans", Lato, sans-serif;fill: #fff;}
```
